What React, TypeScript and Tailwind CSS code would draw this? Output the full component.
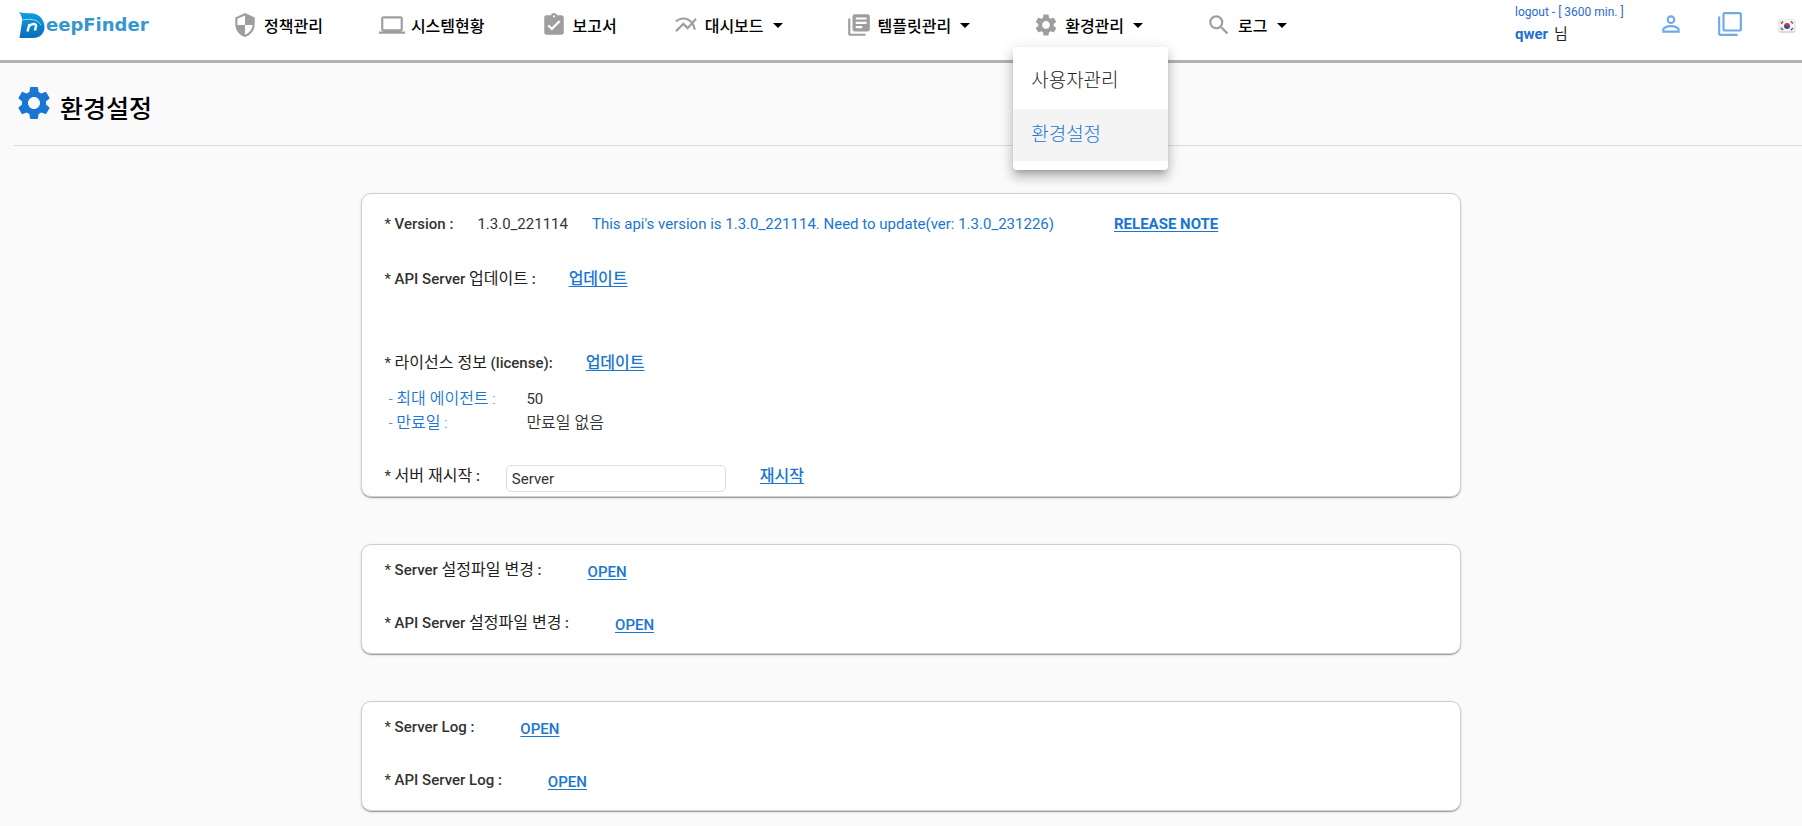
import { type ReactNode } from "react";
import type { IconType } from "react-icons";
import {
  MdArrowDropDown,
  MdAssignmentTurnedIn,
  MdComputer,
  MdFilterNone,
  MdLibraryBooks,
  MdMultilineChart,
  MdPersonOutline,
  MdSearch,
  MdSecurity,
  MdSettings,
} from "react-icons/md";

type NavEntry = {
  label: string;
  Icon: IconType;
  dropdown?: boolean;
  items?: { label: string; active?: boolean }[];
};

const navEntries: NavEntry[] = [
  { label: "정책관리", Icon: MdSecurity },
  { label: "시스템현황", Icon: MdComputer },
  { label: "보고서", Icon: MdAssignmentTurnedIn },
  { label: "대시보드", Icon: MdMultilineChart, dropdown: true },
  { label: "템플릿관리", Icon: MdLibraryBooks, dropdown: true },
  {
    label: "환경관리",
    Icon: MdSettings,
    dropdown: true,
    items: [{ label: "사용자관리" }, { label: "환경설정", active: true }],
  },
  { label: "로그", Icon: MdSearch, dropdown: true },
];

const Logo = () => (
  <a href="#" className="flex shrink-0 items-center">
    <svg width="27" height="28" viewBox="0 0 27 28" aria-hidden="true">
      <defs>
        <linearGradient id="mark" x1="0" y1="0" x2="0" y2="1">
          <stop offset="0" stopColor="#0aa0e6" />
          <stop offset="1" stopColor="#0a6cba" />
        </linearGradient>
      </defs>
      <path
        d="M0 1C5 3 11 1.500 16.500 3C22 5 25.500 10.500 25.500 16C25.500 22.500 21 27 14 27H0.500L3 11C3.500 8 2.500 4 0 1z"
        fill="url(#mark)"
      />
      <path d="M3 9C9 8 18 7 22 14" fill="none" stroke="#cfeaf9" strokeWidth="0.800" />
      <path
        d="M8.500 20.500L10.500 13M10 15.500C12 12.500 17.500 12 17 15L16 19.500"
        fill="none"
        stroke="#fff"
        strokeWidth="2.400"
      />
    </svg>
    <span className="font-['DejaVu_Sans',sans-serif] text-[18px] font-bold text-[#3597cc]">eepFinder</span>
  </a>
);

const KoreaFlag = () => (
  <svg width="18" height="16" viewBox="0 0 18 16" aria-hidden="true">
    <rect x="0.500" y="1" width="17" height="14" rx="2" fill="#dcdcdc" />
    <rect x="1.500" y="1.500" width="15" height="11.500" rx="1" fill="#f7f7f7" />
    <path d="M6 8a3 3 0 0 1 6 0z" fill="#d8323c" />
    <path d="M6 8a3 3 0 0 0 6 0z" fill="#2250a8" />
    <path
      d="M3 5.500l2-2M13 3.500l2 2M3 10l2 2M13 12l2-2"
      stroke="#555"
      strokeWidth="1.800"
      strokeDasharray="1.200 0.400"
    />
  </svg>
);

const NavItem = ({ label, Icon, dropdown, items }: NavEntry) => (
  <li className="relative">
    <button type="button" className="flex h-[50px] items-center whitespace-nowrap text-[16px] font-medium text-black">
      <Icon size={26} className="mr-1.5 text-[#9e9e9e]" />
      <span className="pt-1">{label}</span>
      {dropdown && <MdArrowDropDown size={24} className="ml-0.5" />}
    </button>
    {items && (
      <ul className="absolute -left-5 top-[47px] z-10 flex w-[155px] flex-col gap-0.5 rounded-sm bg-white pb-[9px] pt-2 shadow-[0_5px_5px_-3px_rgba(0,0,0,0.2),0_8px_10px_1px_rgba(0,0,0,0.14),0_3px_14px_2px_rgba(0,0,0,0.12)]">
        {items.map((item) => (
          <li key={item.label}>
            <a
              href="#"
              className={
                item.active
                  ? "flex h-[52px] items-center bg-[#f4f4f4] px-[18px] text-[19px] font-light text-[#1976d2]"
                  : "flex h-[52px] items-center px-[18px] text-[19px] font-light text-[#212121]"
              }
            >
              {item.label}
            </a>
          </li>
        ))}
      </ul>
    )}
  </li>
);

const Header = () => (
  <header className="flex h-[63px] items-start border-b-[3px] border-[#b5b2b5] bg-white pl-[19px] pr-1.5">
    <div className="flex h-[50px] w-[213px] shrink-0 items-center">
      <Logo />
    </div>
    <nav aria-label="메뉴">
      <ul className="flex gap-14">
        {navEntries.map((entry) => (
          <NavItem key={entry.label} {...entry} />
        ))}
      </ul>
    </nav>
    <div className="ml-auto flex shrink-0 items-start">
      <div className="flex w-[143px] flex-col pt-0.5">
        <a href="#" className="text-[12px] leading-5 text-[#2a6bcb]">
          logout - [ 3600 min. ]
        </a>
        <p className="flex gap-1.5 text-[15px] leading-6 text-[#212121]">
          <b className="text-[#1f6fd0]">qwer</b> 님
        </p>
      </div>
      <div className="flex h-[48px] items-center text-[#6fa9e6]">
        <button type="button" aria-label="내 정보" className="mr-[33px]">
          <MdPersonOutline size={26} />
        </button>
        <button type="button" aria-label="새 창" className="mr-[35px]">
          <MdFilterNone size={26} />
        </button>
        <button type="button" aria-label="한국어" className="pt-1">
          <KoreaFlag />
        </button>
      </div>
    </div>
  </header>
);

const Card = ({ children }: { children: ReactNode }) => (
  <section className="mx-auto w-[61vw] rounded-[10px] border border-[#cfcfcf] bg-white px-[22px] shadow-[0_2px_1px_-1px_rgba(0,0,0,0.2),0_1px_1px_rgba(0,0,0,0.14),0_1px_3px_rgba(0,0,0,0.12)]">
    {children}
  </section>
);

// Hangul runs one size up from the Latin text around it
const Ko = ({ children }: { children: ReactNode }) => <span className="text-[16px]">{children}</span>;

// lighter Hangul for the row titles
const KoTitle = ({ children }: { children: ReactNode }) => (
  <span className="text-[16px] font-normal text-[#212121]">{children}</span>
);

const Label = ({ children }: { children: ReactNode }) => (
  <h2 className="font-medium">
    <span className="font-normal">*</span> {children}
  </h2>
);

const LinkButton = ({ children }: { children: ReactNode }) => (
  <button type="button" className="font-medium text-[#1976d2] underline underline-offset-2">
    {children}
  </button>
);

const OpenRow = ({ children }: { children: ReactNode }) => (
  <div className="flex items-start gap-[46px]">
    <Label>{children}</Label>
    <div className="pt-0.5">
      <LinkButton>OPEN</LinkButton>
    </div>
  </div>
);

const OpenCard = ({ children }: { children: ReactNode }) => (
  <Card>
    <div className="flex flex-col gap-[27px] pb-4 pt-[13px]">{children}</div>
  </Card>
);

const ServerCard = () => (
  <Card>
    <div className="flex items-center pt-[18px]">
      <Label>Version :</Label>
      <span className="ml-6">1.3.0_221114</span>
      <span className="ml-6 text-[#1976d2]">
        This api's version is 1.3.0_221114. Need to update(ver: 1.3.0_231226)
      </span>
      <a href="#" className="ml-[60px] font-bold text-[#1976d2] underline underline-offset-2">
        RELEASE NOTE
      </a>
    </div>
    <div className="mt-[31px] flex gap-[33px]">
      <Label>
        API Server <KoTitle>업데이트</KoTitle> :
      </Label>
      <LinkButton>
        <Ko>업데이트</Ko>
      </LinkButton>
    </div>
    <div className="mt-[60px] flex gap-[33px]">
      <Label>
        <KoTitle>라이선스 정보</KoTitle> (license):
      </Label>
      <LinkButton>
        <Ko>업데이트</Ko>
      </LinkButton>
    </div>
    <dl className="mt-3 grid grid-cols-[138px_1fr] pl-1">
      <dt className="font-[350] text-[#1976d2]">
        - <Ko>최대 에이전트</Ko> :
      </dt>
      <dd>50</dd>
      <dt className="font-[350] text-[#1976d2]">
        - <Ko>만료일</Ko> :
      </dt>
      <dd className="font-[350]">
        <Ko>만료일 없음</Ko>
      </dd>
    </dl>
    <div className="mt-[29px] flex items-start pb-1">
      <label htmlFor="target" className="font-medium">
        <span className="font-normal">*</span> <KoTitle>서버 재시작</KoTitle> :
      </label>
      <input
        id="target"
        type="text"
        defaultValue="Server"
        className="ml-[26px] mt-px h-[27px] w-[220px] rounded-[5px] border border-[#dedede] px-[5px] outline-none"
      />
      <div className="ml-[34px]">
        <LinkButton>
          <Ko>재시작</Ko>
        </LinkButton>
      </div>
    </div>
  </Card>
);

export default function App() {
  return (
    <div className="min-h-screen bg-[#fafafa] font-[Roboto,'Noto_Sans_CJK_KR',sans-serif] text-[15px] leading-6 text-[#333]">
      <Header />
      <div className="ml-3.5 flex h-[83px] items-center border-b border-[#dbdbdb]">
        <MdSettings size={40} className="-mt-0.5 text-[#1976d2]" />
        <h1 className="ml-1.5 pt-3 text-[25px] font-medium leading-8 text-black">환경설정</h1>
      </div>
      <main className="flex flex-col gap-[47px] pb-3 pl-5 pt-[47px]">
        <ServerCard />
        <OpenCard>
          <OpenRow>
            Server <KoTitle>설정파일 변경</KoTitle> :
          </OpenRow>
          <OpenRow>
            API Server <KoTitle>설정파일 변경</KoTitle> :
          </OpenRow>
        </OpenCard>
        <OpenCard>
          <OpenRow>Server Log :</OpenRow>
          <OpenRow>API Server Log :</OpenRow>
        </OpenCard>
      </main>
    </div>
  );
}
